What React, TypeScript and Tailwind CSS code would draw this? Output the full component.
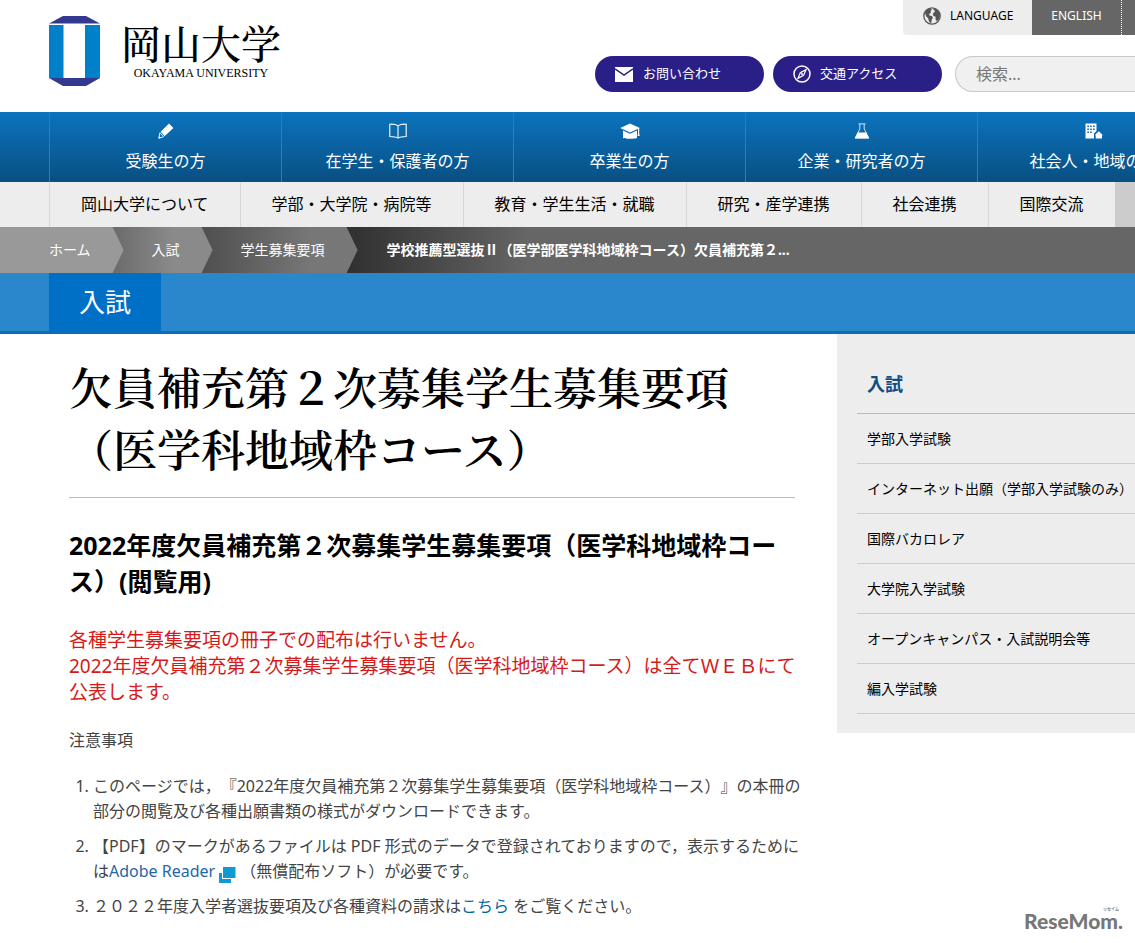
import React from 'react';

const audience = [
  { label: '受験生の方', icon: <PencilIcon /> },
  { label: '在学生・保護者の方', icon: <BookIcon /> },
  { label: '卒業生の方', icon: <CapIcon /> },
  { label: '企業・研究者の方', icon: <FlaskIcon /> },
  { label: '社会人・地域の方', icon: <BuildingIcon /> },
];

const sections = [
  '岡山大学について',
  '学部・大学院・病院等',
  '教育・学生生活・就職',
  '研究・産学連携',
  '社会連携',
  '国際交流',
];

const sideLinks = [
  '学部入学試験',
  'インターネット出願（学部入学試験のみ）',
  '国際バカロレア',
  '大学院入学試験',
  'オープンキャンパス・入試説明会等',
  '編入学試験',
];

function PencilIcon() {
  return (
    <svg width="16" height="16" viewBox="0 0 16 16" fill="#fff" aria-hidden="true">
      <path d="M11 .6 15.4 5 6.6 13.2 2.6 8.8z" />
      <path d="M1.9 9.8 5.6 13.8.8 15.2z" fill="none" stroke="#fff" strokeWidth=".9" />
      <path d="M.6 15.5 1.2 13l1.8 1.9z" />
    </svg>
  );
}

function BookIcon() {
  return (
    <svg width="18" height="16" viewBox="0 0 18 16" fill="none" stroke="#fff" strokeWidth="1.1" aria-hidden="true">
      <path d="M9 2.600C7 1.400 4 1 .8 1.200v12.300c2.700 0 5.800.1 8.200 1.600 2.400-1.500 5.500-1.600 8.200-1.600V1.200C14 1 11 1.400 9 2.600z" />
      <path d="M9 2.600v12.300" />
    </svg>
  );
}

function CapIcon() {
  return (
    <svg width="20" height="16" viewBox="0 0 20 16" fill="#fff" aria-hidden="true">
      <path d="M10 .4 19.800 5 10 9.600.2 5z" />
      <path d="M3 7.400 10 10.800 17 7.400V15c-1.500.6-4 .8-7 .8S4.500 15.600 3 15z" />
      <path d="M18 5h1.200v5.500l.5 2.500h-2.200l.5-2.500z" />
    </svg>
  );
}

function FlaskIcon() {
  return (
    <svg width="16" height="16" viewBox="0 0 16 16" fill="none" stroke="#fff" aria-hidden="true">
      <path d="M4.500.9h7M5.800 1v5L1.200 14.900h13.600L10.200 6V1" strokeWidth=".8" />
      <path d="M3.800 9.500h8.400l2.900 6H.9z" fill="#fff" stroke="none" />
    </svg>
  );
}

function BuildingIcon() {
  return (
    <svg width="18" height="16" viewBox="0 0 18 16" aria-hidden="true">
      <path d="M.5.5h11V8L9 10.500V15.500H.5z" fill="#fff" />
      <path d="M2.300 2.500h1.600v1.500H2.300zM5.200 2.500h1.600v1.500H5.200zM8.100 2.500h1.600v1.500H8.100zM2.300 5.500h1.600V7H2.300zM5.200 5.500h1.600V7H5.200zM8.100 5.500h1.600V7H8.100zM2.300 8.500h1.600V10H2.300zM5.200 8.500h1.600V10H5.200z" fill="#0a67ab" />
      <path d="M13.800 8.300 18 12.200h-1v3.300h-6.300v-3.300h-1z" fill="#fff" />
    </svg>
  );
}

function GlobeIcon() {
  return (
    <svg width="18" height="18" viewBox="0 0 18 18" aria-hidden="true">
      <circle cx="9" cy="9" r="8.200" fill="#ededed" stroke="#555" strokeWidth="1.300" />
      <path d="M2 5.500C3 3.300 5 1.700 7.600 1.300l1.200 1.500-1.300 1.500.5 1.400-1.900 1.200.3 1.500 2.500.6 1 1.800-1.200 2-.5 3.500C6 15.500 5.500 13 5.200 11.200L3 9.300z" fill="#555" />
      <path d="M10.500 1.500c2.500.4 4.600 2 5.600 4.200l.8 3.300-1.200 3.500-2 1.800-1.300-2.300.4-2.300-2.300-.6-.8-2.200 1.500-1.700 1-1.200-1.700-1z" fill="#555" />
    </svg>
  );
}

function MailIcon() {
  return (
    <svg width="18" height="15" viewBox="0 0 18 15" aria-hidden="true">
      <path d="M0 0h18v15H0z" fill="#fff" />
      <path d="M0 1.800 9 8l9-6.200" fill="none" stroke="#2a1f87" strokeWidth="1.500" />
    </svg>
  );
}

function CompassIcon() {
  return (
    <svg width="18" height="18" viewBox="0 0 18 18" fill="none" stroke="#fff" aria-hidden="true">
      <circle cx="9" cy="9" r="8" strokeWidth="1.500" />
      <path d="M13 4.700 10.600 10.200 5 13.300 7.300 7.800z" strokeWidth="1.200" />
      <circle cx="9" cy="9" r="1" fill="#fff" stroke="none" />
    </svg>
  );
}

function NewWindowIcon() {
  return (
    <svg className="mx-1 mt-1 inline-block align-middle" width="17" height="17" viewBox="0 0 17 17" aria-hidden="true">
      <path d="M0 7h12v10H0z" fill="#0e9bd5" />
      <path d="M3 0h14v13H3z" fill="#fff" />
      <path d="M4 1h12.500v11H4z" fill="#0e9bd5" />
    </svg>
  );
}

const Header: React.FC = () => (
  <header className="flex h-28 justify-between pl-[49px]">
    <a href="#" className="flex pt-4 text-black">
      <svg width="52" height="70" viewBox="0 0 52 70" aria-hidden="true">
        <path d="M14 0h23l14 7.500H0z" fill="#32398f" />
        <path d="M0 9h14.500v53H0zM36 9h15v53H36z" fill="#0080c8" />
        <path d="M0 62h51l-14 8H14z" fill="#32398f" />
      </svg>
      <span className="ml-5 flex w-[160px] flex-col items-center pt-[6px]">
        <span className="font-['Noto_Serif_CJK_JP','Noto_Serif_JP','Noto_Sans_CJK_JP',serif] text-[40px] leading-10 font-medium">岡山大学</span>
        <span className="mt-[3px] font-['Liberation_Serif',serif] text-[12px] leading-4 whitespace-nowrap">OKAYAMA UNIVERSITY</span>
      </span>
    </a>
    <div className="flex flex-col items-end">
      <div className="flex h-[35px] text-[12px] leading-8 font-normal">
        <span className="flex w-[129px] gap-[9px] rounded-bl-[4px] bg-[#ededed] pl-5 text-black">
          <span className="pt-[7px]"><GlobeIcon /></span>
          LANGUAGE
        </span>
        <a href="#" className="w-[90px] border-r border-dotted border-white bg-[#666] text-center text-white">ENGLISH</a>
        <span className="w-[13px] bg-[#666]" />
      </div>
      <div className="mt-[21px] flex items-center gap-[9px]">
        <a href="#" className="flex h-9 w-[169px] items-center gap-[10px] rounded-full bg-[#2a1f87] pl-5 text-[13px] font-normal text-white">
          <MailIcon />
          お問い合わせ
        </a>
        <a href="#" className="flex h-9 w-[169px] items-center gap-[9px] rounded-full bg-[#2a1f87] pl-5 text-[13px] font-normal text-white">
          <CompassIcon />
          交通アクセス
        </a>
        <input
          type="search"
          aria-label="検索"
          placeholder="検索..."
          className="ml-1 h-9 w-[180px] rounded-l-full border border-r-0 border-[#c8c8c8] bg-[#f0f0f0] pl-5 text-[16px] placeholder:text-[#777]"
        />
      </div>
    </div>
  </header>
);

const Navigation: React.FC = () => (
  <nav>
    <ul className="flex h-[70px] overflow-hidden bg-linear-to-b from-[#0b74bf] to-[#084f82] pl-[49px]">
      {audience.map((item) => (
        <li key={item.label} className="w-[232px] shrink-0 border-l border-[#2a7fba]">
          <a href="#" className="flex flex-col items-center pt-[11px] text-[16px] leading-6 text-white">
            {item.icon}
            <span className="mt-[10px]">{item.label}</span>
          </a>
        </li>
      ))}
    </ul>
    <div className="flex h-[45px] overflow-hidden bg-[#ccc]">
      <ul className="flex bg-[#ededed] pl-[49px]">
        {sections.map((label) => (
          <li key={label} className="border-l border-[#d8d8d8]">
            <a href="#" className="block px-[31px] text-[16px] leading-[44px] whitespace-nowrap text-black">{label}</a>
          </li>
        ))}
      </ul>
    </div>
  </nav>
);

const Breadcrumb: React.FC = () => {
  const arrow = '[clip-path:polygon(0_0,calc(100%_-_11px)_0,100%_50%,calc(100%_-_11px)_100%,0_100%)]';
  return (
    <ol className="flex h-[46px] overflow-hidden bg-[#666] text-[14px] leading-[46px] whitespace-nowrap text-white">
      <li className={`relative z-30 bg-[#999] pr-[33px] pl-[49px] ${arrow}`}>
        <a href="#">ホーム</a>
      </li>
      <li className={`relative z-20 -ml-[11px] bg-linear-to-r from-[#6b6b6b] to-[#8a8a8a] to-60% pr-[33px] pl-[39px] ${arrow}`}>
        <a href="#">入試</a>
      </li>
      <li className={`relative z-10 -ml-[11px] bg-linear-to-r from-[#4f4f4f] to-[#777] to-70% pr-[33px] pl-[39px] ${arrow}`}>
        <a href="#">学生募集要項</a>
      </li>
      <li className="-ml-[11px] flex-1 bg-linear-to-r from-[#303030] to-[#666] to-[180px] pl-10 font-bold">
        学校推薦型選抜Ⅱ（医学部医学科地域枠コース）欠員補充第２...
      </li>
    </ol>
  );
};

const Article: React.FC = () => (
  <main className="w-[837px] shrink-0 pt-[21px] pr-[42px] pl-[69px] whitespace-nowrap">
    <h1 className="border-b border-[#bbb] pb-[18px] font-['Noto_Serif_CJK_JP','Noto_Serif_JP','Noto_Sans_CJK_JP',serif] text-[44px] leading-[62px] font-semibold text-black">
      欠員補充第２次募集学生募集要項
      <br />
      （医学科地域枠コース）
    </h1>
    <h2 className="mt-[29px] text-[25px] leading-9 font-bold text-black">
      2022年度欠員補充第２次募集学生募集要項（医学科地域枠コー
      <br />
      ス）(閲覧用)
    </h2>
    <p className="mt-7 text-[19px] leading-[26px] text-[#d51a1a]">
      各種学生募集要項の冊子での配布は行いません。
      <br />
      2022年度欠員補充第２次募集学生募集要項（医学科地域枠コース）は全てＷＥＢにて
      <br />
      公表します。
    </p>
    <p className="mt-[23px] text-[16px] leading-[25px]">注意事項</p>
    <ol className="mt-[21px] flex list-decimal flex-col gap-[10px] pl-6 text-[16px] leading-[25px]">
      <li>
        このページでは，『2022年度欠員補充第２次募集学生募集要項（医学科地域枠コース）』の本冊の
        <br />
        部分の閲覧及び各種出願書類の様式がダウンロードできます。
      </li>
      <li>
        【PDF】のマークがあるファイルは PDF 形式のデータで登録されておりますので，表示するために
        <br />
        は<a href="#" className="text-[#2467a8]">Adobe Reader<NewWindowIcon /></a>（無償配布ソフト）が必要です。
      </li>
      <li>
        ２０２２年度入学者選抜要項及び各種資料の請求は<a href="#" className="text-[#00699c]">こちら</a> をご覧ください。
      </li>
    </ol>
  </main>
);

const Sidebar: React.FC = () => (
  <aside className="min-w-0 flex-1 self-start overflow-hidden bg-[#ededed] pb-[19px] pl-5">
    <h2 className="h-20 border-b border-[#bbb] pt-[30px] pl-[10px] text-[18px] font-bold text-[#0b4f86]">
      <a href="#" className="block leading-10">入試</a>
    </h2>
    <ul>
      {sideLinks.map((label) => (
        <li key={label} className="border-b border-[#ccc]">
          <a href="#" className="block pl-[10px] text-[14px] leading-[49px] whitespace-nowrap text-black">{label}</a>
        </li>
      ))}
    </ul>
  </aside>
);

const App: React.FC = () => {
  return (
    <div className="relative min-h-screen overflow-hidden bg-white font-['Noto_Sans','Noto_Sans_CJK_JP',sans-serif] font-[380] text-[#444] [text-spacing-trim:space-all]">
      <Header />
      <Navigation />
      <Breadcrumb />

      {/* Section title */}
      <div className="border-b-3 border-[#0e6cb6] bg-[#2b87cb] pl-[49px]">
        <a href="#" className="inline-block bg-[#0070c6] px-[30px] align-top text-[26px] leading-[58px] text-white">入試</a>
      </div>

      <div className="flex">
        <Article />
        <Sidebar />
      </div>

      {/* Watermark */}
      <div className="absolute right-3 bottom-2 font-['Lato',sans-serif] text-[21px] leading-7 font-black text-[#777]">
        ReseMom.
        <span className="absolute top-0 right-1 font-['Noto_Sans_CJK_JP',sans-serif] text-[4px] leading-1 font-bold">リセイム</span>
      </div>
    </div>
  );
};

export default App;
